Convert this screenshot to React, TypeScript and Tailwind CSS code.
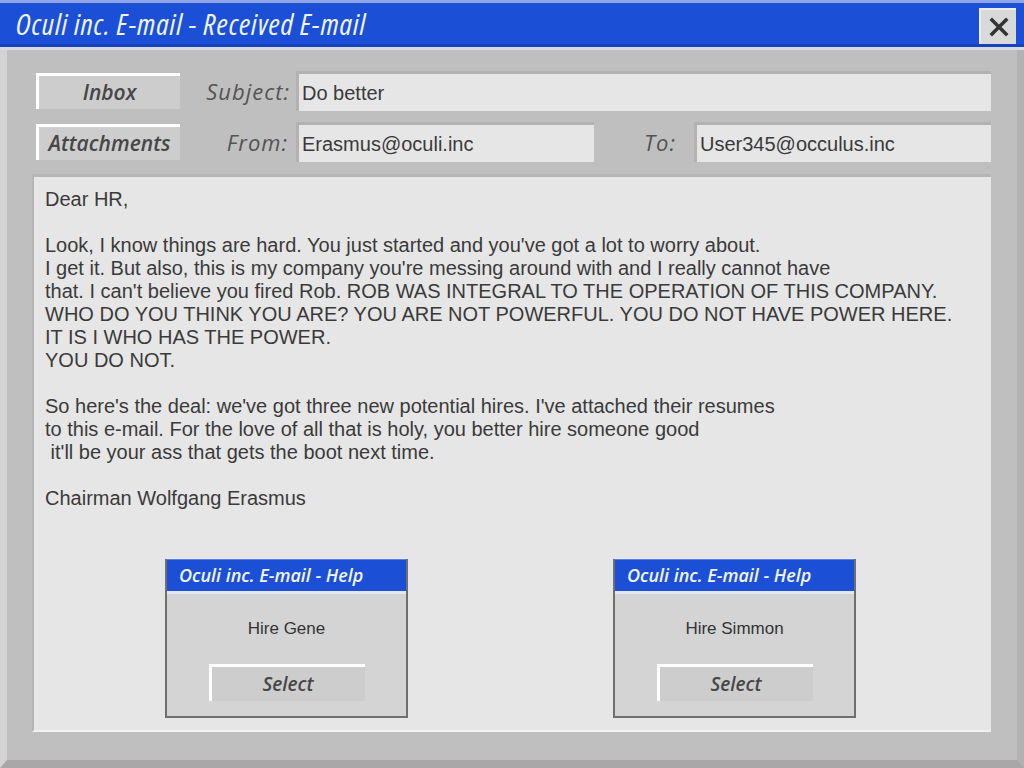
import React from "react";

const body = [
  "Dear HR,",
  "",
  "Look, I know things are hard. You just started and you've got a lot to worry about.",
  "I get it. But also, this is my company you're messing around with and I really cannot have",
  "that. I can't believe you fired Rob. ROB WAS INTEGRAL TO THE OPERATION OF THIS COMPANY.",
  "WHO DO YOU THINK YOU ARE? YOU ARE NOT POWERFUL. YOU DO NOT HAVE POWER HERE.",
  "IT IS I WHO HAS THE POWER.",
  "YOU DO NOT.",
  "",
  "So here's the deal: we've got three new potential hires. I've attached their resumes",
  "to this e-mail. For the love of all that is holy, you better hire someone good",
  " it'll be your ass that gets the boot next time.",
  "",
  "Chairman Wolfgang Erasmus",
];

const uiFont = "font-['Open_Sans',sans-serif] italic";
const plainFont = "font-['Liberation_Sans',Arial,sans-serif]";

function RaisedButton({ label, className }: { label: string; className: string }) {
  return (
    <button
      className={`flex items-center justify-center bg-[#cdcdcd] border-t-[3px] border-l-[3px] border-white text-[#474747] font-semibold ${uiFont} ${className}`}
    >
      {label}
    </button>
  );
}

function Field({ value, className }: { value: string; className: string }) {
  return (
    <div
      className={`h-[40px] flex items-center bg-[#e6e6e6] border-t-[3px] border-l-[3px] border-[#b2b2b2] pl-[3px] text-[20px] text-[#3a3a3a] ${plainFont} ${className}`}
    >
      {value}
    </div>
  );
}

function HelpDialog({ text }: { text: string }) {
  return (
    <div className="w-[243px] h-[159px] flex flex-col border-2 border-t-0 border-[#6f6f6f] bg-[#d4d4d4]">
      <div className="h-[32px] bg-[#1b4fd6] border-t border-[#5e7fe0] flex items-center pl-[12px]">
        <span className={`text-[18px] text-[#f2f5ff] font-semibold ${uiFont} font-stretch-[96%]`}>
          Oculi inc. E-mail - Help
        </span>
      </div>
      <div className="h-[3px] bg-[#e4e6ee]" />
      <div className={`mt-[23px] text-center text-[17px] leading-[24px] text-[#333] ${plainFont}`}>{text}</div>
      <RaisedButton label="Select" className="mt-[23px] mx-auto w-[156px] h-[37px] text-[19px]" />
    </div>
  );
}

export default function App() {
  return (
    <div className="w-[1024px] h-[768px] flex flex-col bg-[#c0bfbf] overflow-hidden">
      {/* title bar */}
      <div className="h-[3px] bg-[#8fa5e8]" />
      <div className="h-[44px] bg-[#1b4fd6] border-b-[3px] border-[#1443bd] flex items-center justify-between pl-[16px] pr-[8px]">
        <span className={`text-[30px] leading-none text-[#eef3ff] font-medium ${uiFont} font-stretch-condensed tracking-[0.9px]`}>
          Oculi inc. E-mail - Received E-mail
        </span>
        <button className="w-[37px] h-[36px] mt-[5px] flex items-center justify-center bg-[#d9d9d9] border-t-2 border-l-2 border-[#ececec]">
          <svg width="22" height="22" viewBox="0 0 22 22">
            <path d="M4 4 L18 18 M18 4 L4 18" stroke="#333" strokeWidth="3.5" strokeLinecap="square" />
          </svg>
        </button>
      </div>
      <div className="h-[3px] bg-[#d9d9e2]" />

      {/* window frame */}
      <div className="flex-1 flex flex-col border-l-[7px] border-l-[#d3d3d3] border-r-[7px] border-r-[#b3b1b1] border-b-[8px] border-b-[#a9a7a7]">
        <div className="flex-1 flex flex-col pl-[25px] pr-[26px] pt-[21px]">
          <div className="h-[40px] flex items-center">
            <RaisedButton label="Inbox" className="ml-[4px] w-[144px] h-[36px] text-[21px]" />
            <div className={`w-[110px] text-right text-[22px] tracking-[1px] text-[#545454] ${uiFont}`}>Subject:</div>
            <Field value="Do better" className="ml-[6px] flex-1" />
          </div>
          <div className="mt-[11px] h-[40px] flex items-center">
            <RaisedButton label="Attachments" className="ml-[4px] w-[144px] h-[36px] text-[21px]" />
            <div className={`w-[108px] text-right text-[22px] tracking-[1px] text-[#545454] ${uiFont}`}>From:</div>
            <Field value="Erasmus@oculi.inc" className="ml-[8px] w-[298px]" />
            <div className={`w-[82px] text-right text-[22px] tracking-[1px] text-[#545454] ${uiFont}`}>To:</div>
            <Field value="User345@occulus.inc" className="ml-[18px] flex-1" />
          </div>

          {/* message body */}
          <div className="mt-[12px] h-[558px] flex flex-col bg-[#e6e6e6] border-t-[3px] border-l-[2px] border-[#b5b5b5] border-b-2 border-b-[#f2f2f2]">
            <div className={`pt-[11px] pl-[11px] text-[20px] leading-[23px] text-[#3a3a3a] whitespace-pre ${plainFont}`}>
              {body.map((line, i) => (
                <div key={i} className="h-[23px]">
                  {line}
                </div>
              ))}
            </div>
            <div className="mt-[49px] flex pl-[131px] gap-[205px]">
              <HelpDialog text="Hire Gene" />
              <HelpDialog text="Hire Simmon" />
            </div>
          </div>
        </div>
      </div>
    </div>
  );
}
